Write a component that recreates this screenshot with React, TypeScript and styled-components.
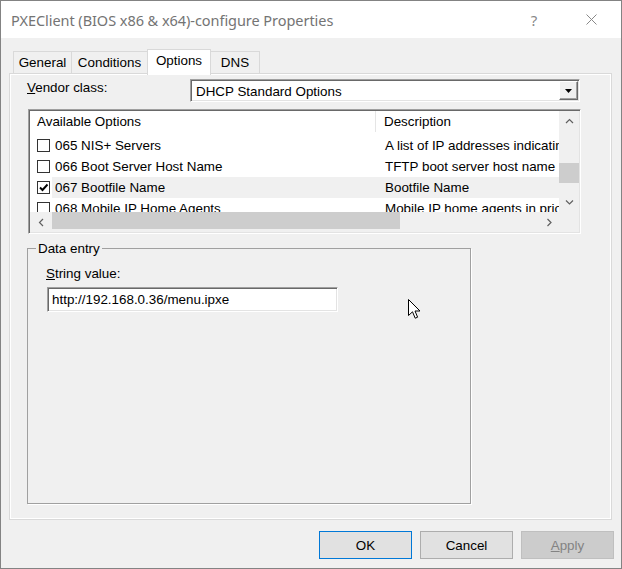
import React from "react";
import styled, { createGlobalStyle } from "styled-components";

const Global = createGlobalStyle`
  html, body { margin: 0; padding: 0; background: #fff; }
  body {
    font-family: "Liberation Sans", Arial, sans-serif;
    font-size: 13.4px;
    color: #000;
  }
  * { box-sizing: border-box; }
`;

const Window = styled.div`
  position: relative;
  width: 622px;
  height: 569px;
  border: 1px solid #838383;
  display: flex;
  flex-direction: column;
  background: #f0f0f0;
  overflow: hidden;
`;

const TitleBar = styled.div`
  height: 37px;
  flex: none;
  background: #fff;
  display: flex;
  align-items: center;
  padding-left: 10px;
`;

const TitleText = styled.div`
  font-family: "Noto Sans", "Open Sans", sans-serif;
  font-size: 14.5px;
  color: #747474;
  letter-spacing: -0.05px;
`;

const TitleButtons = styled.div`
  margin-left: auto;
  display: flex;
  gap: 29px;
  padding-right: 16px;
`;

const TitleButton = styled.div`
  width: 28px;
  height: 24px;
  display: flex;
  align-items: center;
  justify-content: center;
  font-family: "Noto Sans", sans-serif;
  font-size: 15px;
  color: #888;
`;

const Body = styled.div`
  flex: 1;
  display: flex;
  flex-direction: column;
  padding: 11px 7px 9px 8px;
`;

const TabStrip = styled.div`
  display: flex;
  align-items: flex-end;
  height: 24px;
  padding-left: 4px;
  position: relative;
  z-index: 1;
`;

const Tab = styled.div<{ $w: number; $active?: boolean }>`
  width: ${(p) => p.$w}px;
  height: ${(p) => (p.$active ? 26 : 22)}px;
  margin-bottom: ${(p) => (p.$active ? -2 : 0)}px;
  margin-left: -1px;
  background: ${(p) => (p.$active ? "#fff" : "#f0f0f0")};
  border: 1px solid #d9d9d9;
  border-bottom: none;
  display: flex;
  align-items: center;
  justify-content: center;
  padding-bottom: ${(p) => (p.$active ? 4 : 0)}px;
  position: relative;
  z-index: ${(p) => (p.$active ? 2 : 1)};
  &:first-child { margin-left: 0; }
`;

const Panel = styled.div`
  height: 447px;
  margin-right: 2px;
  border: 1px solid #d9d9d9;
  box-shadow: inset 1px 1px 0 #fff, inset -1px -1px 0 #fff;
  padding: 5px 0 0 17px;
  display: flex;
  flex-direction: column;
`;

const VendorRow = styled.div`
  display: flex;
  align-items: flex-start;
`;

const FieldLabel = styled.div<{ $w?: number }>`
  width: ${(p) => (p.$w ? `${p.$w}px` : "auto")};
  line-height: 15px;
  padding-top: 1px;
`;

const Sunken = styled.div`
  border: 1px solid;
  border-color: #a0a0a0 #fff #fff #a0a0a0;
  box-shadow: inset 1px 1px 0 #696969, inset -1px -1px 0 #e3e3e3;
  padding: 1px;
`;

const Dropdown = styled(Sunken)`
  width: 390px;
  height: 23px;
  background: #fff;
  display: flex;
  align-items: center;
`;

const DropdownText = styled.div`
  flex: 1;
  padding-left: 4px;
  padding-top: 1px;
`;

const DropButton = styled.div`
  width: 19px;
  height: 19px;
  background: #f0f0f0;
  border: 1px solid;
  border-color: #fff #696969 #696969 #fff;
  box-shadow: inset -1px -1px 0 #a0a0a0;
  display: flex;
  align-items: center;
  justify-content: center;
`;

const ListView = styled(Sunken)`
  margin: 7px 0 0 1px;
  width: 553px;
  height: 125px;
  display: grid;
  grid-template-columns: 1fr 20px;
  grid-template-rows: 1fr 20px;
`;

const ListContent = styled.div`
  background: #fff;
  overflow: hidden;
`;

const HeaderRow = styled.div`
  display: grid;
  grid-template-columns: 346px 1fr;
  height: 21px;
  background: #fff;
`;

const HeaderCell = styled.div<{ $pl: number; $divider?: boolean }>`
  display: flex;
  align-items: center;
  padding-left: ${(p) => p.$pl}px;
  border-right: ${(p) => (p.$divider ? "1px solid #e5e5e5" : "none")};
  white-space: nowrap;
  overflow: hidden;
`;

const Rows = styled.div`
  padding-top: 3px;
`;

const Row = styled.div`
  display: flex;
  height: 21px;
`;

const CheckCell = styled.div`
  width: 22px;
  padding-left: 7px;
  display: flex;
  align-items: center;
`;

const CheckBox = styled.div`
  width: 13px;
  height: 13px;
  border: 1px solid #333;
  background: #fff;
  display: flex;
  align-items: center;
  justify-content: center;
`;

const RowBody = styled.div<{ $selected?: boolean }>`
  flex: 1;
  display: grid;
  grid-template-columns: 324px 1fr;
  align-items: center;
  background: ${(p) => (p.$selected ? "#f0f0f0" : "transparent")};
`;

const Cell = styled.div<{ $pl: number }>`
  padding-left: ${(p) => p.$pl}px;
  white-space: nowrap;
  overflow: hidden;
`;

const VScroll = styled.div`
  background: #f0f0f0;
  display: flex;
  flex-direction: column;
`;

const HScroll = styled.div`
  background: #f0f0f0;
  display: flex;
`;

const ArrowBox = styled.div<{ $w: number; $h: number }>`
  width: ${(p) => p.$w}px;
  height: ${(p) => p.$h}px;
  flex: none;
  display: flex;
  align-items: center;
  justify-content: center;
`;

const Thumb = styled.div<{ $w: number; $h: number; $mt?: number }>`
  width: ${(p) => p.$w}px;
  height: ${(p) => p.$h}px;
  margin-top: ${(p) => p.$mt ?? 0}px;
  background: #cdcdcd;
  flex: none;
`;

const Spacer = styled.div`
  flex: 1;
`;

const Corner = styled.div`
  background: #f0f0f0;
`;

const GroupBox = styled.fieldset`
  margin: 7px 0 0 0;
  width: 444px;
  height: 263px;
  border: 1px solid #a0a0a0;
  box-shadow: 1px 1px 0 #fff;
  padding: 9px 0 0 18px;
  min-width: 0;
`;

const Legend = styled.legend`
  margin-left: -10px;
  padding: 0 2px;
  line-height: 15px;
`;

const TextInput = styled(Sunken)`
  margin: 6px 0 0 1px;
  width: 291px;
  height: 25px;
  background: #fff;
  display: flex;
  align-items: center;
  padding-left: 4px;
`;

const ButtonRow = styled.div`
  margin-top: 11px;
  display: flex;
  justify-content: flex-end;
  gap: 8px;
`;

const Button = styled.div<{ $variant?: "default" | "disabled" }>`
  width: 93px;
  height: 28px;
  display: flex;
  align-items: center;
  justify-content: center;
  background: ${(p) => (p.$variant === "disabled" ? "#cccccc" : "#e1e1e1")};
  border: 1px solid
    ${(p) =>
      p.$variant === "default"
        ? "#0078d7"
        : p.$variant === "disabled"
        ? "#bfbfbf"
        : "#adadad"};
  color: ${(p) => (p.$variant === "disabled" ? "#838383" : "#000")};
`;

const Pointer = styled.svg`
  position: absolute;
  left: 407px;
  top: 298px;
`;

const Chevron = ({ dir }: { dir: "up" | "down" | "left" | "right" }) => {
  const d =
    dir === "up"
      ? "M1 5 L4.5 1.5 L8 5"
      : dir === "down"
      ? "M1 1.5 L4.5 5 L8 1.5"
      : dir === "left"
      ? "M5 1 L1.5 4.5 L5 8"
      : "M1.5 1 L5 4.5 L1.5 8";
  const w = dir === "up" || dir === "down" ? 9 : 7;
  const h = dir === "up" || dir === "down" ? 7 : 9;
  return (
    <svg width={w} height={h} viewBox={`0 0 ${w} ${h}`}>
      <path d={d} fill="none" stroke="#606060" strokeWidth="1.2" />
    </svg>
  );
};

const rows = [
  {
    name: "065 NIS+ Servers",
    desc: "A list of IP addresses indicating NIS+ servers available to the client",
    checked: false,
  },
  {
    name: "066 Boot Server Host Name",
    desc: "TFTP boot server host name",
    checked: false,
  },
  { name: "067 Bootfile Name", desc: "Bootfile Name", checked: true, selected: true },
  {
    name: "068 Mobile IP Home Agents",
    desc: "Mobile IP home agents in priority order",
    checked: false,
  },
];

const tabs = [
  { label: "General", w: 59 },
  { label: "Conditions", w: 77 },
  { label: "Options", w: 64, active: true },
  { label: "DNS", w: 50 },
];

export default function App() {
  return (
    <>
      <Global />
      <Window>
        <TitleBar>
          <TitleText>PXEClient (BIOS x86 &amp; x64)-configure Properties</TitleText>
          <TitleButtons>
            <TitleButton>?</TitleButton>
            <TitleButton>
              <svg width="11" height="11" viewBox="0 0 11 11">
                <path d="M0.5 0.5 L10.5 10.5 M10.5 0.5 L0.5 10.5" stroke="#888" strokeWidth="1" />
              </svg>
            </TitleButton>
          </TitleButtons>
        </TitleBar>
        <Body>
          <TabStrip>
            {tabs.map((t) => (
              <Tab key={t.label} $w={t.w} $active={t.active}>
                {t.label}
              </Tab>
            ))}
          </TabStrip>
          <Panel>
            <VendorRow>
              <FieldLabel $w={163}>
                <u>V</u>endor class:
              </FieldLabel>
              <Dropdown>
                <DropdownText>DHCP Standard Options</DropdownText>
                <DropButton>
                  <svg width="7" height="4" viewBox="0 0 7 4">
                    <path d="M0 0 H7 L3.5 4 Z" fill="#000" />
                  </svg>
                </DropButton>
              </Dropdown>
            </VendorRow>
            <ListView>
              <ListContent>
                <HeaderRow>
                  <HeaderCell $pl={7} $divider>
                    Available Options
                  </HeaderCell>
                  <HeaderCell $pl={8}>Description</HeaderCell>
                </HeaderRow>
                <Rows>
                  {rows.map((r) => (
                    <Row key={r.name}>
                      <CheckCell>
                        <CheckBox>
                          {r.checked && (
                            <svg width="11" height="11" viewBox="0 0 11 11">
                              <path d="M2 5.5 L4.5 8 L9.5 2.5" fill="none" stroke="#000" strokeWidth="1.9" />
                            </svg>
                          )}
                        </CheckBox>
                      </CheckCell>
                      <RowBody $selected={r.selected}>
                        <Cell $pl={3}>{r.name}</Cell>
                        <Cell $pl={9}>{r.desc}</Cell>
                      </RowBody>
                    </Row>
                  ))}
                </Rows>
              </ListContent>
              <VScroll>
                <ArrowBox $w={20} $h={20}>
                  <Chevron dir="up" />
                </ArrowBox>
                <Thumb $w={20} $h={20} $mt={32} />
                <Spacer />
                <ArrowBox $w={20} $h={20}>
                  <Chevron dir="down" />
                </ArrowBox>
              </VScroll>
              <HScroll>
                <ArrowBox $w={22} $h={20}>
                  <Chevron dir="left" />
                </ArrowBox>
                <Thumb $w={348} $h={17} />
                <Spacer />
                <ArrowBox $w={20} $h={20}>
                  <Chevron dir="right" />
                </ArrowBox>
              </HScroll>
              <Corner />
            </ListView>
            <GroupBox>
              <Legend>Data entry</Legend>
              <FieldLabel>
                <u>S</u>tring value:
              </FieldLabel>
              <TextInput>http://192.168.0.36/menu.ipxe</TextInput>
            </GroupBox>
          </Panel>
          <ButtonRow>
            <Button $variant="default">OK</Button>
            <Button>Cancel</Button>
            <Button $variant="disabled">
              <span>
                <u>A</u>pply
              </span>
            </Button>
          </ButtonRow>
        </Body>
        <Pointer width="13" height="21" viewBox="0 0 13 21">
          <path
            d="M0.5 0.5 L0.5 16.5 L4.5 12.8 L7.2 19.2 L9.6 18.2 L7 12 L12 12 Z"
            fill="#fff"
            stroke="#000"
            strokeWidth="1"
            strokeLinejoin="miter"
          />
        </Pointer>
      </Window>
    </>
  );
}
